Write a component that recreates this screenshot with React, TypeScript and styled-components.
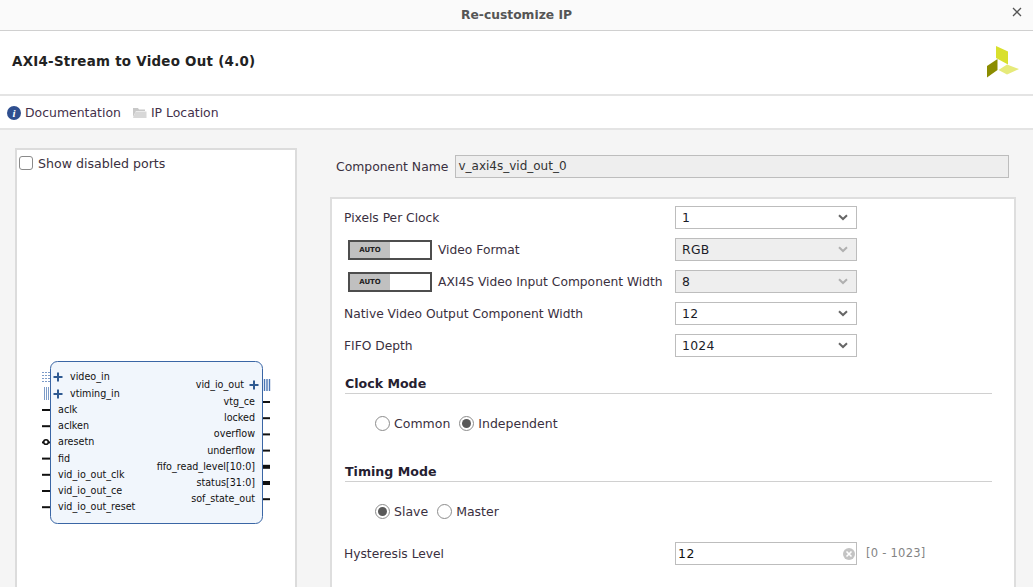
import React from "react";
import styled, { createGlobalStyle } from "styled-components";

const Global = createGlobalStyle`
  html, body { margin: 0; padding: 0; background: #f5f5f5; }
  #root { height: 587px; overflow: hidden; }
  * { box-sizing: border-box; }
`;
const Page = styled.div`
  width: 1033px; height: 587px; overflow: hidden; display: flex; flex-direction: column;
  font-family: "DejaVu Sans", sans-serif; font-size: 12.5px; color: #3a3040; background: #f5f5f5;
`;
const TitleBar = styled.div`
  height: 31px; flex: none; background: #fafafa; border-bottom: 1px solid #d0d0d0;
  display: flex; align-items: center; justify-content: center; position: relative; padding-bottom: 1px;
  font-weight: bold; font-size: 12.3px; color: #555;
`;
const CloseBtn = styled.svg`
  position: absolute; right: 11px; top: 7px; width: 10px; height: 10px;
`;
const Header = styled.div`
  height: 65px; flex: none; background: #fff; border-bottom: 2px solid #e4e4e4;
  display: flex; align-items: center; justify-content: space-between; padding: 0 14px 2px 12px;
`;
const Title = styled.div`font-weight: bold; font-size: 13.4px; color: #222; letter-spacing: .27px;`;
const Toolbar = styled.div`
  height: 34px; flex: none; background: #fff; border-bottom: 2px solid #e4e4e4;
  display: flex; align-items: center; padding: 1px 0 0 7px; gap: 11px;
`;
const ToolItem = styled.div`display: flex; align-items: center; gap: 4px; font-size: 12.45px; color: #43304a;`;
const Body = styled.div`flex: 1; min-height: 0; display: flex; padding: 18px 17px 0 15px; gap: 33px;`;
const LeftPanel = styled.div`
  width: 282px; flex: none; height: 460px; background: #fff; border: 2px solid #dcdcdc;
  display: flex; flex-direction: column; padding: 3px 2px 2px;
`;
const CheckRow = styled.label`display: flex; align-items: center; gap: 5px; font-size: 12.6px; height: 20px;`;
const CheckBox = styled.span`width: 14px; height: 14px; border: 1px solid #8a8a8a; border-radius: 3px; background: #fff;`;
const Diagram = styled.svg`display: block; margin: 172px 0 0 21px; width: 240px; height: 190px;`;
const RightCol = styled.div`flex: 1; min-width: 0; display: flex; flex-direction: column;`;
const NameRow = styled.div`
  height: 49px; flex: none; display: flex; align-items: flex-start; padding: 7px 7px 0 6px; gap: 7px;
`;
const NameLabel = styled.span`line-height: 23px; font-size: 12.4px;`;
const NameInput = styled.div`
  flex: 1; height: 23px; background: #eee; border: 1px solid #bdbdbd; padding-left: 2px;
  line-height: 21px; font-size: 12px; color: #333;
`;
const Form = styled.div`
  flex: 1; height: 420px; background: #fff; border: 2px solid #dedede; border-bottom: 0; padding: 7px 0 0 12px;
`;
const Row = styled.div`height: 32px; display: flex; align-items: flex-start;`;
const RowLabel = styled.div`width: 331px; display: flex; align-items: center; height: 23px; font-size: 12.28px; gap: 6px;`;
const AutoToggle = styled.span`
  margin-left: 4px; width: 84px; height: 20px; border: 2px solid #4d4d4d; background: #fff; display: flex;
`;
const AutoPart = styled.span`
  width: 40px; background: #c0c0c0; font-size: 7px; font-weight: bold; color: #222; display: flex; align-items: center; justify-content: center;
`;
const Select = styled.div<{ $off?: boolean }>`
  width: 182px; height: 23px; border: 1px solid #bdbdbd; background: ${p => (p.$off ? "#eee" : "#fff")};
  display: flex; align-items: center; justify-content: space-between; padding: 0 8px 0 6px;
  font-size: 12.4px; color: #1c1c28; letter-spacing: .3px;
`;
const SectionTitle = styled.div<{ $top: number }>`
  margin: ${p => p.$top}px 22px 0 1px; height: 21px; border-bottom: 1px solid #d0d0d0;
  font-weight: bold; font-size: 12.6px; color: #252030; line-height: 21px;
`;
const RadioRow = styled.div`display: flex; align-items: center; height: 20px; margin: 19px 0 0 31px; gap: 9px;`;
const RadioItem = styled.label`display: flex; align-items: center; gap: 4px; font-size: 12.5px;`;
const RadioCircle = styled.span<{ $on?: boolean }>`
  width: 15px; height: 15px; border: 1px solid #8c8c8c; border-radius: 50%; background: #fff; display: flex; align-items: center; justify-content: center;
  &::after { content: ""; width: 9px; height: 9px; border-radius: 50%; background: ${p => (p.$on ? "#595959" : "transparent")}; }
`;
const HystRow = styled.div`display: flex; align-items: flex-start; margin-top: 21px;`;
const HystInput = styled.div`
  width: 182px; height: 23px; border: 1px solid #bdbdbd; background: #fff; display: flex; align-items: center;
  justify-content: space-between; padding: 0 0 0 2px; font-size: 12.4px; color: #111; letter-spacing: .6px;
`;
const ClearIcon = styled.svg`width: 14px; height: 14px; margin-right: 0;`;
const RangeHint = styled.span`margin-left: 9px; line-height: 23px; font-size: 11.5px; color: #848484; letter-spacing: .25px;`;

const Chevron = ({ off }: { off?: boolean }) => (
  <svg width="10" height="7" viewBox="0 0 10 7">
    <path d="M1 1.2 L5 5 L9 1.2" fill="none" stroke={off ? "#b0b0b0" : "#666"} strokeWidth="2" />
  </svg>
);

const Logo = () => (
  <svg width="32" height="32" viewBox="0 0 32 32">
    <polygon points="9,0 21,5.5 21,18.5 9,12" fill="#d9e02c" />
    <polygon points="0,20 10.5,13 10.5,24 0,31.5" fill="#8b8c00" />
    <polygon points="11.5,24 20,18.5 32,23 20,28.5" fill="#e6ea7a" />
  </svg>
);

const leftPorts = ["aclk", "aclken", "aresetn", "fid", "vid_io_out_clk", "vid_io_out_ce", "vid_io_out_reset"];
const rightPorts: [string, boolean][] = [
  ["vtg_ce", false], ["locked", false], ["overflow", false], ["underflow", false],
  ["fifo_read_level[10:0]", true], ["status[31:0]", true], ["sof_state_out", false],
];
const Plus = ({ x, y }: { x: number; y: number }) => (
  <path d={`M${x - 4.5} ${y}H${x + 4.5}M${x} ${y - 4.5}V${y + 4.5}`} stroke="#2f5a92" strokeWidth="2" />
);
const lbl = { fontFamily: '"DejaVu Sans", sans-serif', fontSize: 9.6, fill: "#111" };

const BlockDiagram = () => (
  <Diagram viewBox="0 0 240 190">
    <rect x="10.5" y="16.5" width="212" height="162" rx="7" fill="#f1f6fc" stroke="#3a66a5" strokeWidth="1" />
    <g stroke="#7d9cc8" strokeWidth="1" fill="none">
      <path d="M2 27.5H10M2 30.5H10M2 33.5H10M2 36.5H10" strokeDasharray="2 1" />
      <path d="M4.5 42V55M6.5 42V55M8.5 42V55" />
    </g>
    <path d="M224.5 34V46M227 34V46M229.5 34V46" stroke="#4a76b5" strokeWidth="1.4" />
    <Plus x={18} y={32} />
    <Plus x={18} y={49} />
    <Plus x={214} y={40} />
    <text x="30" y="35" {...lbl}>video_in</text>
    <text x="30" y="52" {...lbl}>vtiming_in</text>
    <text x="204" y="43" textAnchor="end" {...lbl}>vid_io_out</text>
    {leftPorts.map((p, i) => (
      <g key={p}>
        <text x="18" y={68 + i * 16.2} {...lbl}>{p}</text>
        <path d={`M2 ${65 + i * 16.2}H10`} stroke="#111" strokeWidth="2" />
      </g>
    ))}
    <circle cx="6" cy="97" r="2.3" fill="#fff" stroke="#111" strokeWidth="1.6" />
    {rightPorts.map(([p, bus], i) => (
      <g key={p}>
        <text x="215" y={60 + i * 16.2} textAnchor="end" {...lbl}>{p}</text>
        <path d={`M223 ${57 + i * 16.2}H230`} stroke="#111" strokeWidth={bus ? 4 : 2} />
      </g>
    ))}
  </Diagram>
);

export default function App() {
  return (
    <Page>
      <Global />
      <TitleBar>
        Re-customize IP
        <CloseBtn viewBox="0 0 10 10"><path d="M1 1L9 9M9 1L1 9" stroke="#555" strokeWidth="1.3" /></CloseBtn>
      </TitleBar>
      <Header>
        <Title>AXI4-Stream to Video Out (4.0)</Title>
        <Logo />
      </Header>
      <Toolbar>
        <ToolItem>
          <svg width="14" height="14" viewBox="0 0 14 14">
            <circle cx="7" cy="7" r="7" fill="#2f4f8f" />
            <text x="7" y="11" textAnchor="middle" fontFamily='"Liberation Serif", serif' fontStyle="italic" fontWeight="bold" fontSize="11" fill="#fff">i</text>
          </svg>
          Documentation
        </ToolItem>
        <ToolItem>
          <svg width="15" height="13" viewBox="0 0 15 13">
            <path d="M1 2H6L7 3.5H13V5H4L1 11Z" fill="#c8c8c8" />
            <path d="M3.5 5.5H14.5V12H1Z" fill="#d8d8d8" />
          </svg>
          IP Location
        </ToolItem>
      </Toolbar>
      <Body>
        <LeftPanel>
          <CheckRow><CheckBox />Show disabled ports</CheckRow>
          <BlockDiagram />
        </LeftPanel>
        <RightCol>
          <NameRow>
            <NameLabel>Component Name</NameLabel>
            <NameInput>v_axi4s_vid_out_0</NameInput>
          </NameRow>
          <Form>
            <Row>
              <RowLabel>Pixels Per Clock</RowLabel>
              <Select>1<Chevron /></Select>
            </Row>
            <Row>
              <RowLabel><AutoToggle><AutoPart>AUTO</AutoPart></AutoToggle>Video Format</RowLabel>
              <Select $off>RGB<Chevron off /></Select>
            </Row>
            <Row>
              <RowLabel><AutoToggle><AutoPart>AUTO</AutoPart></AutoToggle>AXI4S Video Input Component Width</RowLabel>
              <Select $off>8<Chevron off /></Select>
            </Row>
            <Row>
              <RowLabel>Native Video Output Component Width</RowLabel>
              <Select>12<Chevron /></Select>
            </Row>
            <Row>
              <RowLabel>FIFO Depth</RowLabel>
              <Select>1024<Chevron /></Select>
            </Row>
            <SectionTitle $top={7}>Clock Mode</SectionTitle>
            <RadioRow>
              <RadioItem><RadioCircle />Common</RadioItem>
              <RadioItem><RadioCircle $on />Independent</RadioItem>
            </RadioRow>
            <SectionTitle $top={28}>Timing Mode</SectionTitle>
            <RadioRow>
              <RadioItem><RadioCircle $on />Slave</RadioItem>
              <RadioItem><RadioCircle />Master</RadioItem>
            </RadioRow>
            <HystRow>
              <RowLabel>Hysteresis Level</RowLabel>
              <HystInput>
                12
                <ClearIcon viewBox="0 0 14 14">
                  <circle cx="7" cy="7" r="6" fill="#c4c4c4" />
                  <path d="M4.5 4.5L9.5 9.5M9.5 4.5L4.5 9.5" stroke="#fff" strokeWidth="1.6" />
                </ClearIcon>
              </HystInput>
              <RangeHint>[0 - 1023]</RangeHint>
            </HystRow>
          </Form>
        </RightCol>
      </Body>
    </Page>
  );
}
